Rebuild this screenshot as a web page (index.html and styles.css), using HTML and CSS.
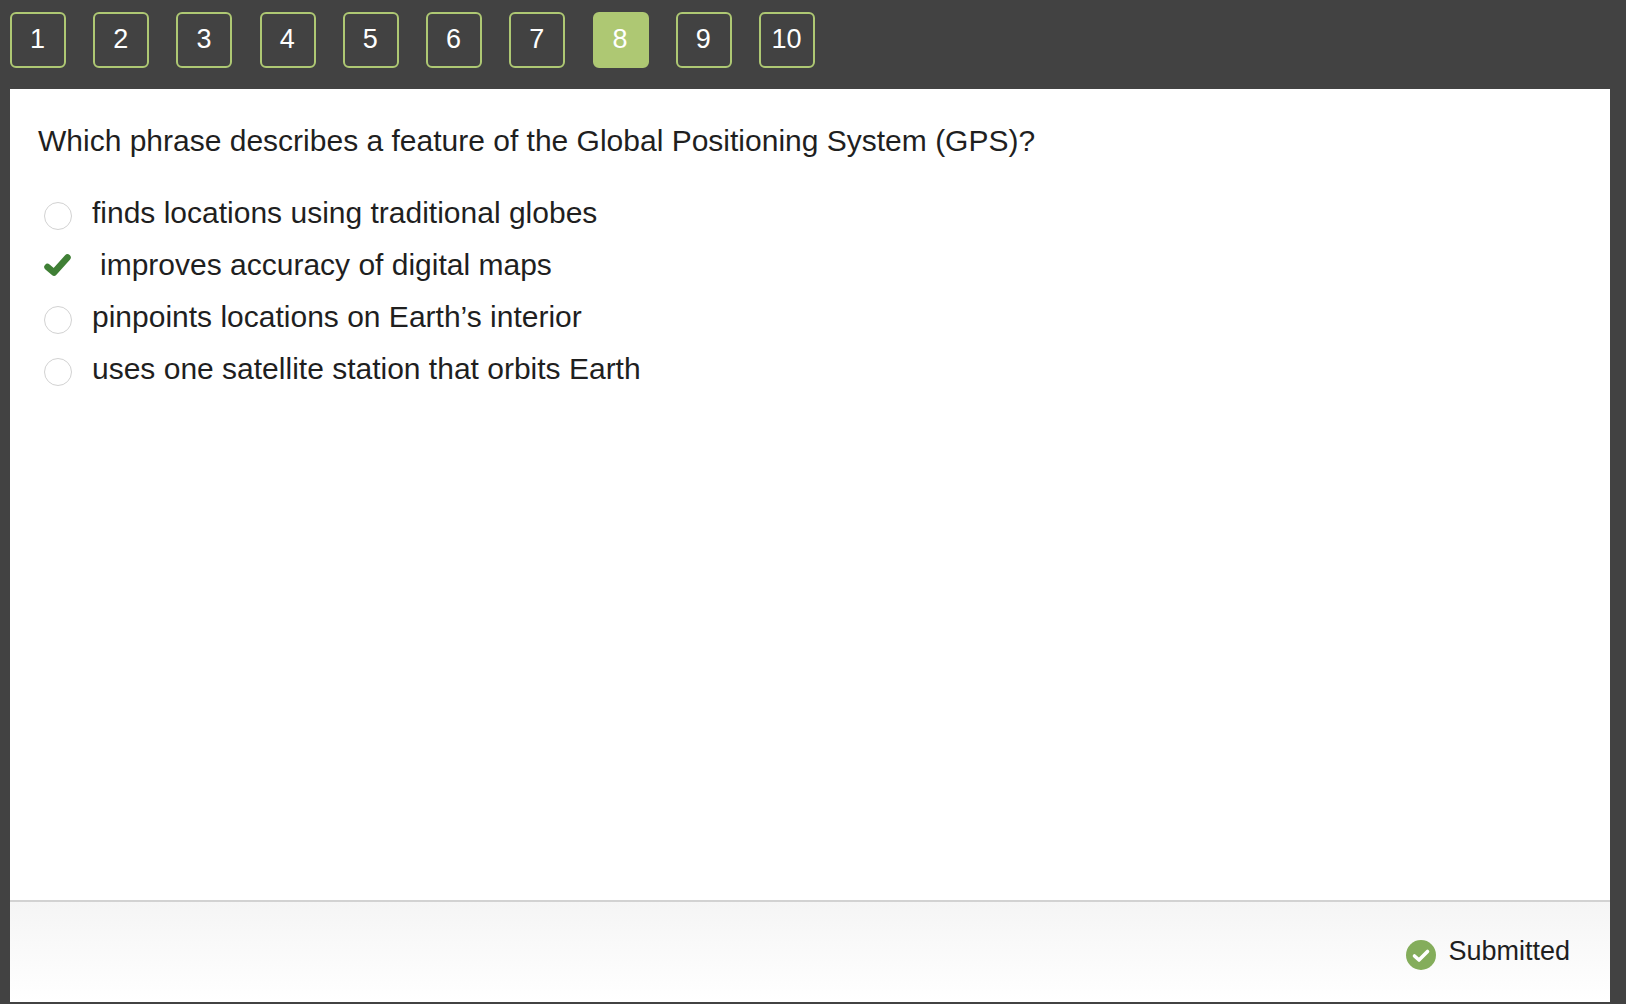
FILE: index.html
```html
<!DOCTYPE html>
<html lang="en">
<head>
<meta charset="utf-8">
<title>Question 8</title>
<link rel="stylesheet" href="styles.css">
</head>
<body>
<nav class="pager">
  <a class="page">1</a>
  <a class="page">2</a>
  <a class="page">3</a>
  <a class="page">4</a>
  <a class="page">5</a>
  <a class="page">6</a>
  <a class="page">7</a>
  <a class="page current">8</a>
  <a class="page">9</a>
  <a class="page">10</a>
</nav>
<main class="card">
  <section class="body">
    <h1 class="question">Which phrase describes a feature of the Global Positioning System (GPS)?</h1>
    <ul class="options">
      <li class="option"><span class="radio"></span><span>finds locations using traditional globes</span></li>
      <li class="option"><svg class="tick" viewBox="0 0 28 24"><path d="M3.5 14 10 19.5 23.5 4.5" fill="none" stroke="#3f7f35" stroke-width="6.5" stroke-linecap="round" stroke-linejoin="round"/></svg><span class="picked">improves accuracy of digital maps</span></li>
      <li class="option"><span class="radio"></span><span>pinpoints locations on Earth’s interior</span></li>
      <li class="option"><span class="radio"></span><span>uses one satellite station that orbits Earth</span></li>
    </ul>
  </section>
  <footer class="foot">
    <svg class="done" viewBox="0 0 30 30"><circle cx="15" cy="15" r="15" fill="#84ad5b"/><path d="M8.5 16 13 20 21.5 11.5" fill="none" stroke="#fff" stroke-width="3.6" stroke-linecap="round" stroke-linejoin="round"/></svg>
    <span class="status">Submitted</span>
  </footer>
</main>
</body>
</html>
```

FILE: styles.css
```css
* { box-sizing: border-box; }
html, body { height: 100%; }
body {
  margin: 0;
  padding: 12px 16px 2px 10px;
  display: flex;
  flex-direction: column;
  background: #424242;
  font-family: "Liberation Sans", Arial, sans-serif;
  color: #1f1f1f;
  overflow: hidden;
}
.pager { display: flex; gap: 27.23px; height: 77px; flex: none; }
.page {
  width: 56px;
  height: 56px;
  display: flex;
  align-items: center;
  justify-content: center;
  padding: 0 1px 2px 0;
  border: 2px solid #aec873;
  border-radius: 6px;
  color: #fff;
  font-size: 27px;
}
.page.current { background: #aec873; }
.card { flex: 1; display: flex; flex-direction: column; background: #fff; }
.body { flex: 1; padding: 35px 28px 0; }
.question { margin: 0 0 29px; font-size: 30px; font-weight: 400; line-height: 34px; }
.options { margin: 0; padding: 0; list-style: none; }
.option { display: flex; align-items: center; height: 52px; font-size: 30px; padding-left: 6px; }
.radio {
  width: 28px;
  height: 28px;
  margin: 5px 20px 0 0;
  border: 1.5px solid #d2d2d2;
  border-radius: 50%;
}
.tick { width: 28px; height: 24px; margin-right: 20px; }
.picked { margin-left: 8px; }
.foot {
  height: 102px;
  flex: none;
  display: flex;
  align-items: center;
  justify-content: flex-end;
  gap: 12px;
  padding: 0 40px 0 0;
  border-top: 2px solid #d2d2d2;
  background: linear-gradient(#f5f5f5, #fff);
}
.done { width: 30px; height: 30px; margin-top: 5px; }
.status { font-size: 27px; margin-bottom: 2px; }
```
